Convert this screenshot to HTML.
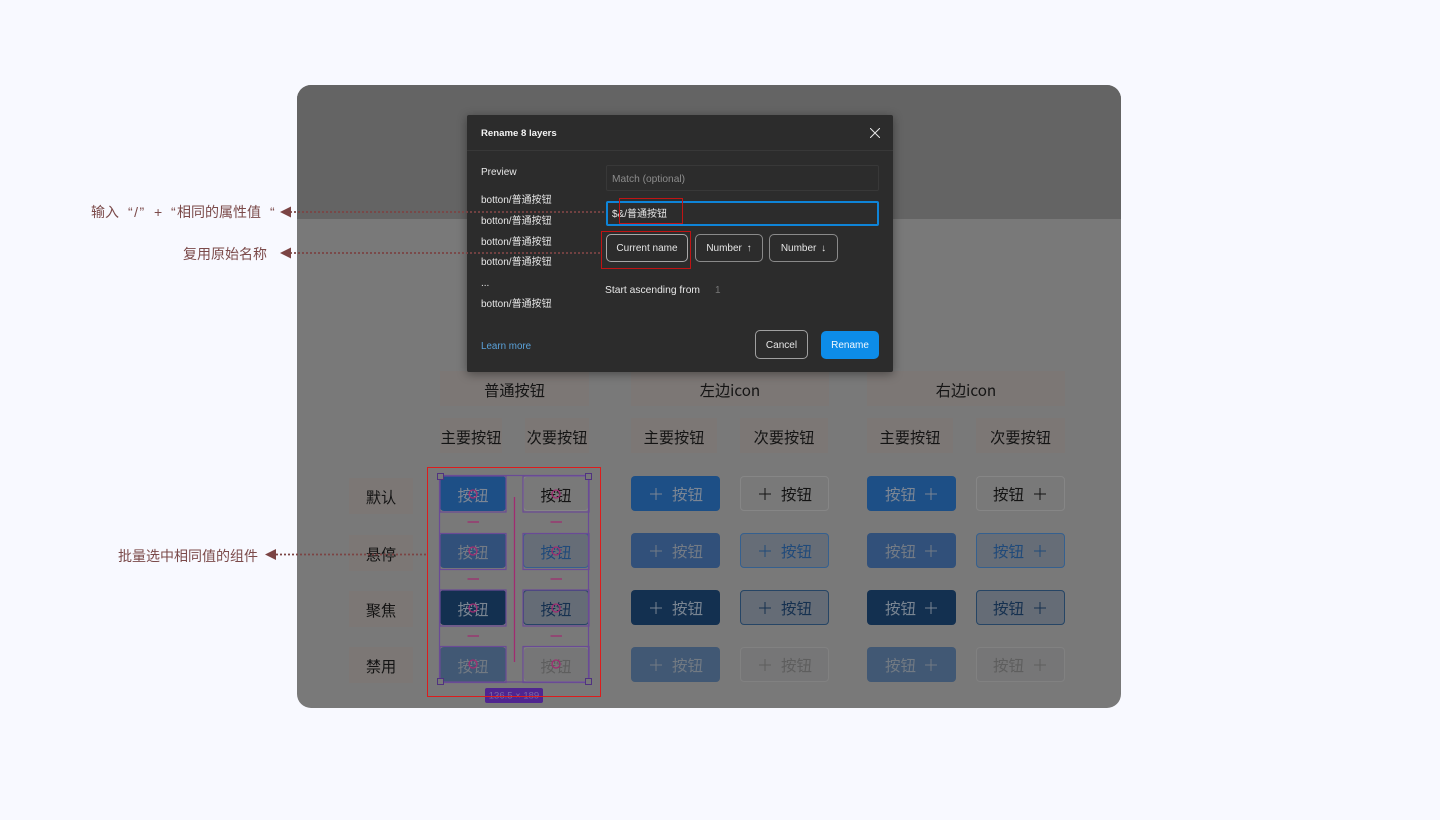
<!DOCTYPE html>
<html lang="zh"><head><meta charset="utf-8"><title>Rename layers</title>
<style>
html,body{margin:0;padding:0;width:1440px;height:820px;overflow:hidden;background:#f8f9ff}
body{position:relative;font-family:"Liberation Sans","Noto Sans CJK SC",sans-serif}
div,span{position:absolute;box-sizing:border-box;white-space:nowrap}
#panel{left:297px;top:85px;width:824px;height:623px;border-radius:14px;background:#797979;overflow:hidden}
#top{left:0;top:0;width:824px;height:134px;background:#646464}
.l{background:#7c7775;color:#141414;font-size:15.200px;display:flex;align-items:center;justify-content:center;font-family:"Noto Sans CJK SC",sans-serif;padding-top:2px}
.b{width:89px;height:35px;border-radius:4px;font-family:"Noto Sans CJK SC",sans-serif;font-size:15.500px;line-height:39px}
.s{width:66px;text-align:center}
.pri{background:#1d4f86;color:#7c8694}
.hov{background:#31507a;color:#747b85}
.prs{background:#133050;color:#7a8592}
.dis{background:#415874;color:#727a83}
.sec{background:#797979;border:1px solid #868686;color:#141414;line-height:37px}
.sh{background:#666d77;border:1px solid #35608f;color:#204a7a;line-height:37px}
.sp{background:#656c76;border:1px solid #264565;color:#15304f;line-height:37px}
.sd{background:#767677;border:1px solid #818181;color:#5e5e5e;line-height:37px}
.b i{position:absolute;font-style:normal;top:-1px}
.b svg{position:absolute;top:12px;width:12px;height:12px}
.b svg path{stroke:currentColor;stroke-width:1;fill:none}
.a{color:#7b4a4a;font-size:14px;line-height:20px;font-family:"Liberation Sans","Noto Sans CJK SC",sans-serif}
#dlg{left:467px;top:115px;width:426px;height:257px;background:#2c2c2c;border-radius:2px;box-shadow:0 2px 10px rgba(0,0,0,.4);color:#e8e8e8;font-size:10px}
.t{line-height:14px;height:14px}
.db{border:1px solid #8a8a8a;border-radius:5px;color:#e6e6e6;font-size:10px;text-align:center}
</style></head><body>

<div id="panel"><div id="top"></div></div>

<!-- headers -->
<div class="l" style="left:440px;top:371px;width:149px;height:35px">普通按钮</div>
<div class="l" style="left:631px;top:371px;width:198px;height:35px">左边icon</div>
<div class="l" style="left:867px;top:371px;width:198px;height:35px">右边icon</div>
<div class="l" style="left:440px;top:418px;width:62px;height:35px">主要按钮</div>
<div class="l" style="left:525px;top:418px;width:64px;height:35px">次要按钮</div>
<div class="l" style="left:631px;top:418px;width:86px;height:35px">主要按钮</div>
<div class="l" style="left:740px;top:418px;width:88px;height:35px">次要按钮</div>
<div class="l" style="left:867px;top:418px;width:86px;height:35px">主要按钮</div>
<div class="l" style="left:976px;top:418px;width:89px;height:35px">次要按钮</div>
<div class="l" style="left:349px;top:478px;width:64px;height:36px">默认</div>
<div class="l" style="left:349px;top:535px;width:64px;height:36px">悬停</div>
<div class="l" style="left:349px;top:591px;width:64px;height:36px">聚焦</div>
<div class="l" style="left:349px;top:647px;width:64px;height:36px">禁用</div>

<!-- normal buttons -->
<div class="b s pri" style="left:440px;top:476px">按钮</div>
<div class="b s sec" style="left:523px;top:476px">按钮</div>
<div class="b s hov" style="left:440px;top:533px">按钮</div>
<div class="b s sh" style="left:523px;top:533px">按钮</div>
<div class="b s prs" style="left:440px;top:590px">按钮</div>
<div class="b s sp" style="left:523px;top:590px">按钮</div>
<div class="b s dis" style="left:440px;top:647px">按钮</div>
<div class="b s sd" style="left:523px;top:647px">按钮</div>

<!-- left icon -->
<div class="b pri" style="left:631px;top:476px"><svg style="left:19px" viewBox="0 0 12 12"><path d="M6 0V12M0 6H12"/></svg><i style="left:41px">按钮</i></div>
<div class="b sec" style="left:740px;top:476px"><svg style="left:18px;top:11px" viewBox="0 0 12 12"><path d="M6 0V12M0 6H12"/></svg><i style="left:40px">按钮</i></div>
<div class="b hov" style="left:631px;top:533px"><svg style="left:19px" viewBox="0 0 12 12"><path d="M6 0V12M0 6H12"/></svg><i style="left:41px">按钮</i></div>
<div class="b sh" style="left:740px;top:533px"><svg style="left:18px;top:11px" viewBox="0 0 12 12"><path d="M6 0V12M0 6H12"/></svg><i style="left:40px">按钮</i></div>
<div class="b prs" style="left:631px;top:590px"><svg style="left:19px" viewBox="0 0 12 12"><path d="M6 0V12M0 6H12"/></svg><i style="left:41px">按钮</i></div>
<div class="b sp" style="left:740px;top:590px"><svg style="left:18px;top:11px" viewBox="0 0 12 12"><path d="M6 0V12M0 6H12"/></svg><i style="left:40px">按钮</i></div>
<div class="b dis" style="left:631px;top:647px"><svg style="left:19px" viewBox="0 0 12 12"><path d="M6 0V12M0 6H12"/></svg><i style="left:41px">按钮</i></div>
<div class="b sd" style="left:740px;top:647px"><svg style="left:18px;top:11px" viewBox="0 0 12 12"><path d="M6 0V12M0 6H12"/></svg><i style="left:40px">按钮</i></div>

<!-- right icon -->
<div class="b pri" style="left:867px;top:476px"><i style="left:18px">按钮</i><svg style="left:58px" viewBox="0 0 12 12"><path d="M6 0V12M0 6H12"/></svg></div>
<div class="b sec" style="left:976px;top:476px"><i style="left:16px">按钮</i><svg style="left:57px;top:11px" viewBox="0 0 12 12"><path d="M6 0V12M0 6H12"/></svg></div>
<div class="b hov" style="left:867px;top:533px"><i style="left:18px">按钮</i><svg style="left:58px" viewBox="0 0 12 12"><path d="M6 0V12M0 6H12"/></svg></div>
<div class="b sh" style="left:976px;top:533px"><i style="left:16px">按钮</i><svg style="left:57px;top:11px" viewBox="0 0 12 12"><path d="M6 0V12M0 6H12"/></svg></div>
<div class="b prs" style="left:867px;top:590px"><i style="left:18px">按钮</i><svg style="left:58px" viewBox="0 0 12 12"><path d="M6 0V12M0 6H12"/></svg></div>
<div class="b sp" style="left:976px;top:590px"><i style="left:16px">按钮</i><svg style="left:57px;top:11px" viewBox="0 0 12 12"><path d="M6 0V12M0 6H12"/></svg></div>
<div class="b dis" style="left:867px;top:647px"><i style="left:18px">按钮</i><svg style="left:58px" viewBox="0 0 12 12"><path d="M6 0V12M0 6H12"/></svg></div>
<div class="b sd" style="left:976px;top:647px"><i style="left:16px">按钮</i><svg style="left:57px;top:11px" viewBox="0 0 12 12"><path d="M6 0V12M0 6H12"/></svg></div>

<!-- selection overlay -->
<svg style="position:absolute;left:0;top:0" width="1440" height="820" viewBox="0 0 1440 820">
<g fill="none" stroke="#6a4a96" stroke-width="1.200">
<rect x="440" y="476" width="66" height="36"/><rect x="523" y="476" width="66" height="36"/>
<rect x="440" y="533.500" width="66" height="36"/><rect x="523" y="533.500" width="66" height="36"/>
<rect x="440" y="590" width="66" height="36"/><rect x="523" y="590" width="66" height="36"/>
<rect x="440" y="646.500" width="66" height="36"/><rect x="523" y="646.500" width="66" height="36"/>
<rect x="439.500" y="475.500" width="149" height="206.500"/>
</g>
<g fill="none" stroke="#a02c70" stroke-width="1.300">
<circle cx="473" cy="494" r="4"/><circle cx="556" cy="494" r="4"/>
<circle cx="473" cy="551" r="4"/><circle cx="556" cy="551" r="4"/>
<circle cx="473" cy="608" r="4"/><circle cx="556" cy="608" r="4"/>
<circle cx="473" cy="664" r="4"/><circle cx="556" cy="664" r="4"/>
<path d="M467.500 522H479M550.500 522H562M467.500 579H479M550.500 579H562M467.500 636H479M550.500 636H562M514.500 497V662"/>
</g>
<g fill="#797979" stroke="#4f3280" stroke-width="1">
<rect x="437.500" y="473.500" width="6" height="6"/><rect x="585.500" y="473.500" width="6" height="6"/>
<rect x="437.500" y="678.500" width="6" height="6"/><rect x="585.500" y="678.500" width="6" height="6"/>
</g>
<rect x="485" y="688" width="58" height="15" rx="2" fill="#4f2590"/>
<text x="514" y="698.500" text-anchor="middle" font-family="Liberation Sans" font-size="9.500" fill="#7d68a3">136.5 × 189</text>
<rect x="427.500" y="467.500" width="173" height="229" fill="none" stroke="#dd1c1c" stroke-width="1"/>
</svg>

<!-- dialog -->
<div id="dlg">
  <div style="left:0;top:35px;width:426px;height:1px;background:#383838"></div>
  <div class="t" style="left:14px;top:11px;font-weight:bold;font-size:9.600px;color:#f4f4f4;line-height:15px">Rename 8 layers</div>
  <svg style="position:absolute;left:403px;top:13px" width="10" height="10" viewBox="0 0 10 10"><path d="M0 0L10 10M10 0L0 10" stroke="#e6e6e6" stroke-width="1" fill="none"/></svg>
  <div class="t" style="left:14px;top:51px">Preview</div>
  <div class="t" style="left:14px;top:79px">botton/普通按钮</div>
  <div class="t" style="left:14px;top:100px">botton/普通按钮</div>
  <div class="t" style="left:14px;top:121px">botton/普通按钮</div>
  <div class="t" style="left:14px;top:141px">botton/普通按钮</div>
  <div class="t" style="left:14px;top:162px">...</div>
  <div class="t" style="left:14px;top:183px">botton/普通按钮</div>
  <div class="t" style="left:139px;top:50px;width:273px;height:26px;border:1px solid #383838;border-radius:2px"></div>
  <div class="t" style="left:145px;top:58px;color:#8c8c8c;font-size:10.200px">Match (optional)</div>
  <div class="t" style="left:139px;top:86px;width:273px;height:25px;border:2px solid #0e84d8;border-radius:2px"></div>
  <div class="t" style="left:145px;top:93px">$&amp;/普通按钮</div>
  <div class="db" style="left:139px;top:119px;width:82px;height:28px;line-height:28px;border-color:#a8a8a8">Current name</div>
  <div class="db" style="left:228px;top:119px;width:68px;height:28px;line-height:28px;word-spacing:2px">Number ↑</div>
  <div class="db" style="left:302px;top:119px;width:69px;height:28px;line-height:28px;word-spacing:2px">Number ↓</div>
  <div class="t" style="left:138px;top:169px;font-size:10.300px">Start ascending from</div>
  <div class="t" style="left:248px;top:169px;color:#777">1</div>
  <div class="t" style="left:14px;top:225px;color:#5aa2da;font-size:9.800px">Learn more</div>
  <div class="db" style="left:288px;top:215px;width:53px;height:29px;line-height:29px;border-color:#a0a0a0">Cancel</div>
  <div class="db" style="left:354px;top:216px;width:58px;height:28px;line-height:29px;background:#0d8ce9;border:0;color:#f2f8fe;font-weight:normal">Rename</div>
</div>

<!-- annotations -->
<span class="a" style="left:91px;top:202px">输入</span>
<span class="a" style="left:128px;top:202px;letter-spacing:1.500px">“/”</span>
<span class="a" style="left:154px;top:202px">+</span>
<span class="a" style="left:171px;top:202px">“</span>
<span class="a" style="left:177px;top:202px">相同的属性值</span>
<span class="a" style="left:270px;top:202px">“</span>
<span class="a" style="left:183px;top:244px">复用原始名称</span>
<span class="a" style="left:118px;top:546px">批量选中相同值的组件</span>

<svg style="position:absolute;left:0;top:0" width="1440" height="820" viewBox="0 0 1440 820">
<g stroke="#7b4444" stroke-width="1.800" stroke-dasharray="2 2" fill="none">
<path d="M290 212H606M290 253H602M276 554.500H427"/>
</g>
<g fill="#7b4444">
<path d="M280 212L291 206.500V217.500Z"/><path d="M280 253L291 247.500V258.500Z"/><path d="M265 554.500L276 549V560Z"/>
</g>
<g fill="none" stroke="#c01414" stroke-width="1">
<rect x="619.500" y="198.500" width="63" height="25"/>
<rect x="601.500" y="231.500" width="89" height="37"/>
</g>
</svg>
</body></html>
